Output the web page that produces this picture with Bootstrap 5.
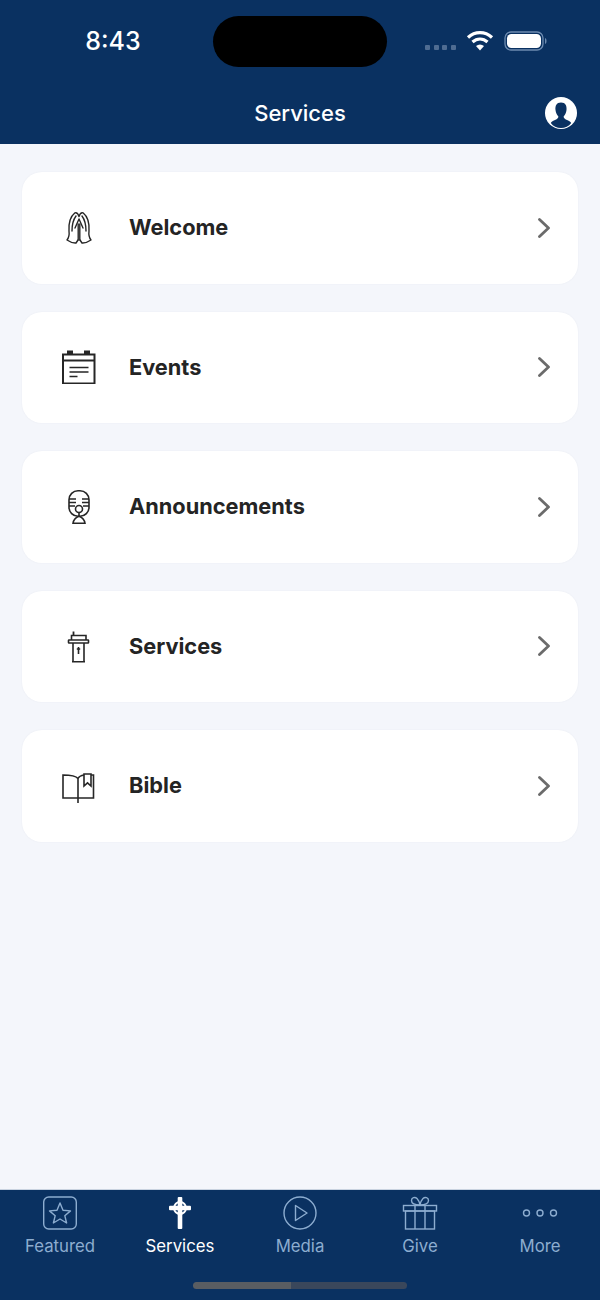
<!DOCTYPE html>
<html lang="en">

<head>
    <meta charset="UTF-8" />
    <meta name="viewport" content="width=device-width, initial-scale=1" />
    <title>Services</title>
    <link href="https://cdn.jsdelivr.net/npm/bootstrap@5.3.0/dist/css/bootstrap.min.css" rel="stylesheet">

    <style>
        body {
            width: 600px;
            height: 1300px;
            background-color: #f4f6fb;
            font-family: Inter, "Liberation Sans", sans-serif;
            overflow: hidden;
        }

        .app-top {
            height: 144px;
            background-color: #0a3161;
            color: #fff;
        }

        .status-row {
            padding-top: 16px;
        }

        .status-time {
            width: 213px;
            height: 51px;
            padding-top: 7px;
            padding-left: 13px;
            font-size: 25px;
            font-weight: 500;
        }

        .island {
            width: 174px;
            height: 51px;
            border-radius: 26px;
            background-color: #000;
        }

        .status-icons {
            padding-left: 38px;
            padding-top: 15px;
            height: 51px;
        }

        .title-row {
            display: grid;
            grid-template-columns: 1fr auto 1fr;
            margin-top: 30px;
            padding-right: 23px;
            height: 32px;
            padding-left: 23px;
        }

        .title-text {
            font-size: 22px;
            font-weight: 500;
            line-height: 32px;
        }

        .menu-list {
            padding: 28px 22px 0;
            gap: 28px;
        }

        .menu-card {
            height: 111.5px;
            padding: 0 27px 0 40px;
            background-color: #fff;
            border: 0;
            border-radius: 20px;
            box-shadow: 0 0 2px rgba(20, 40, 80, 0.05);
        }

        .menu-icon {
            width: 34px;
            height: 34px;
            margin-right: 33px;
            flex: none;
        }

        .menu-label {
            font-size: 21.75px;
            font-weight: 700;
            color: #242424;
        }

        .app-tabs {
            height: 111px;
            background-color: #0a3161;
            border-top: 1px solid #c9d3e0;
            padding-top: 6px;
        }

        .tab-item {
            width: 120px;
            color: #8dadd0;
            font-size: 16.8px;
            line-height: 20px;
        }

        .tab-item.active-tab {
            color: #fff;
        }

        .tab-icon {
            width: 36px;
            height: 34px;
            margin-bottom: 6px;
        }

        .home-bar {
            width: 214px;
            height: 7px;
            margin: 26px auto 0;
            border-radius: 4px;
            background: linear-gradient(to right, #595d62 46%, #3a475b 46%);
        }
    </style>
</head>

<body class="d-flex flex-column">

    <!-- Header -->
    <header class="app-top">
        <div class="status-row d-flex">
            <div class="status-time text-center">8:43</div>
            <div class="island"></div>
            <div class="status-icons d-flex align-items-start">
                <svg width="122" height="30" viewBox="0 0 122 30">
                    <g fill="#4f6c92">
                        <rect x="0" y="14" width="5" height="5" rx="1" />
                        <rect x="9" y="14" width="5" height="5" rx="1" />
                        <rect x="17" y="14" width="5" height="5" rx="1" />
                        <rect x="26" y="14" width="5" height="5" rx="1" />
                    </g>
                    <g fill="none" stroke="#fff" stroke-width="3.2">
                        <path d="M43 6.500 C50 0 60 0 67 6.500" />
                        <path d="M47.500 11 C52 7 58 7 62.500 11" />
                    </g>
                    <path d="M51 15 C53.500 13 56.500 13 59 15 L55 19.500 Z" fill="#fff" />
                    <rect x="80" y="1" width="38" height="18" rx="6" fill="none" stroke="#6d8bb0" stroke-width="1.3" />
                    <rect x="82" y="3" width="34" height="14" rx="4.500" fill="#fff" />
                    <path d="M120 7 C122 7.500 122 12.500 120 13 Z" fill="#6d8bb0" />
                </svg>
            </div>
        </div>
        <div class="title-row">
            <div></div>
            <div class="title-text">Services</div>
            <div class="d-flex justify-content-end">
                <svg width="32" height="32" viewBox="0 0 32 32">
                    <circle cx="16" cy="16" r="16" fill="#fff" />
                    <path d="M16 5.500 C11.500 5.500 10 9 10.500 13 C10.800 16 12 18 13.300 19.300 C13.500 21 12.500 22 10 23 C7.500 24 6.300 25 5.800 26 C8 29.500 12 31 16 31 C20 31 24 29.500 26.200 26 C25.700 25 24.500 24 22 23 C19.500 22 18.500 21 18.700 19.300 C20 18 21.200 16 21.500 13 C22 9 20.500 5.500 16 5.500 Z" fill="#0a3161" />
                </svg>
            </div>
        </div>
    </header>

    <!-- Menu -->
    <main class="menu-list flex-grow-1 d-flex flex-column">
        <div class="card menu-card flex-row align-items-center">
            <svg class="menu-icon" viewBox="0 0 34 34" fill="none" stroke="#262626" stroke-width="1.400" stroke-linejoin="round" stroke-linecap="round">
                <path d="M16 29 L14 32 C11 32.300 8 31 5 29 C7 26.500 7.500 24 7 20 C6.500 12 9 5 13 1.800 C15 1.200 16.200 3 17 5.500 C17.800 3 19 1.200 21 1.800 C25 5 27.500 12 27 20 C26.500 24 27 26.500 29 29 C26 31 23 32.300 20 32 L18 29" />
                <path d="M10 20 C10 14 11 9 14 5" />
                <path d="M24 20 C24 14 23 9 20 5" />
                <path d="M13 17 L17 8 L21 17" />
                <path d="M16.200 13 V29 M17.800 13 V29" />
            </svg>
            <div class="menu-label flex-grow-1">Welcome</div>
            <svg width="14" height="20" viewBox="0 0 14 20" fill="none" stroke="#6b6b6b" stroke-width="2.800" stroke-linecap="round" stroke-linejoin="round"><path d="M2.500 1.500 L11.500 10 L2.500 18.500" /></svg>
        </div>

        <div class="card menu-card flex-row align-items-center">
            <svg class="menu-icon" viewBox="0 0 34 34" fill="none" stroke="#262626" stroke-width="2">
                <rect x="1" y="4.500" width="31.500" height="29" />
                <path d="M1 10.500 H33" />
                <rect x="5" y="0.500" width="6" height="4" fill="#262626" stroke="none" />
                <rect x="22" y="0.500" width="6" height="4" fill="#262626" stroke="none" />
                <path d="M7.500 17.500 H26.500 M7.500 22 H26.500 M7.500 26.500 H15.500" stroke-width="1.600" />
            </svg>
            <div class="menu-label flex-grow-1">Events</div>
            <svg width="14" height="20" viewBox="0 0 14 20" fill="none" stroke="#6b6b6b" stroke-width="2.800" stroke-linecap="round" stroke-linejoin="round"><path d="M2.500 1.500 L11.500 10 L2.500 18.500" /></svg>
        </div>

        <div class="card menu-card flex-row align-items-center">
            <svg class="menu-icon" viewBox="0 0 34 34" fill="none" stroke="#262626" stroke-width="1.600">
                <rect x="7" y="0.800" width="20" height="25.500" rx="9" />
                <path d="M7 9 H14 M7 12.500 H14 M7 16 H13 M20 9 H27 M20 12.500 H27 M21 16 H27" />
                <circle cx="17" cy="19" r="3.500" />
                <path d="M17 22.500 V26" />
                <path d="M11 33.300 H23 C22.500 30 20 27.500 17 26.300 C14 27.500 11.500 30 11 33.300 Z" />
            </svg>
            <div class="menu-label flex-grow-1">Announcements</div>
            <svg width="14" height="20" viewBox="0 0 14 20" fill="none" stroke="#6b6b6b" stroke-width="2.800" stroke-linecap="round" stroke-linejoin="round"><path d="M2.500 1.500 L11.500 10 L2.500 18.500" /></svg>
        </div>

        <div class="card menu-card flex-row align-items-center">
            <svg class="menu-icon" viewBox="0 0 34 34" fill="none" stroke="#262626" stroke-width="1.600">
                <path d="M11.500 2.500 V6.500" stroke-width="1.800" />
                <path d="M9.500 11 V6.500 H24 V11" />
                <rect x="6.500" y="11" width="20" height="3" rx="0.500" />
                <path d="M11 14 V32.500 M22 14 V32.500 M10 32.800 H23" />
                <path d="M16.500 18 V25 M14.800 20 H18.200" />
            </svg>
            <div class="menu-label flex-grow-1">Services</div>
            <svg width="14" height="20" viewBox="0 0 14 20" fill="none" stroke="#6b6b6b" stroke-width="2.800" stroke-linecap="round" stroke-linejoin="round"><path d="M2.500 1.500 L11.500 10 L2.500 18.500" /></svg>
        </div>

        <div class="card menu-card flex-row align-items-center">
            <svg class="menu-icon" viewBox="0 0 34 34" fill="none" stroke="#262626" stroke-width="1.600">
                <path d="M16 29 V9.500 C14 7 11 6 1 6 V29 H31.500 V6 H29" />
                <path d="M16 9.500 C17 7.500 19 6.500 22 6" />
                <path d="M22 5 H29 V17 L25.500 13.800 L22 17 Z" />
                <path d="M16 29 V34" />
            </svg>
            <div class="menu-label flex-grow-1">Bible</div>
            <svg width="14" height="20" viewBox="0 0 14 20" fill="none" stroke="#6b6b6b" stroke-width="2.800" stroke-linecap="round" stroke-linejoin="round"><path d="M2.500 1.500 L11.500 10 L2.500 18.500" /></svg>
        </div>
    </main>

    <!-- Tab bar -->
    <footer class="app-tabs">
        <div class="d-flex">
            <div class="tab-item d-flex flex-column align-items-center">
                <svg class="tab-icon" viewBox="0 0 36 34" fill="none" stroke="#8dadd0" stroke-width="1.400" stroke-linejoin="round">
                    <rect x="1.700" y="1" width="32.600" height="32" rx="5" />
                    <path d="M18 7 L21 14.300 L28.500 14.900 L22.800 19.700 L24.600 27 L18 23 L11.400 27 L13.200 19.700 L7.500 14.900 L15 14.300 Z" />
                </svg>
                <span>Featured</span>
            </div>
            <div class="tab-item active-tab d-flex flex-column align-items-center">
                <svg class="tab-icon" viewBox="0 0 36 34" fill="#fff">
                    <rect x="15.700" y="1" width="4.600" height="32" rx="1" />
                    <rect x="7" y="9.700" width="22" height="4.600" rx="1" />
                    <circle cx="18" cy="12" r="6" fill="none" stroke="#fff" stroke-width="1.800" />
                </svg>
                <span>Services</span>
            </div>
            <div class="tab-item d-flex flex-column align-items-center">
                <svg class="tab-icon" viewBox="0 0 36 34" fill="none" stroke="#8dadd0" stroke-width="1.400" stroke-linejoin="round">
                    <circle cx="18" cy="17" r="16" />
                    <path d="M13.500 9.500 L25 17 L13.500 24.500 Z" />
                </svg>
                <span>Media</span>
            </div>
            <div class="tab-item d-flex flex-column align-items-center">
                <svg class="tab-icon" viewBox="0 0 36 34" fill="none" stroke="#8dadd0" stroke-width="1.400">
                    <rect x="1.500" y="9.500" width="33" height="5.500" />
                    <rect x="3.500" y="15" width="29" height="18" />
                    <path d="M13 9.500 V33 M23 9.500 V33" />
                    <path d="M18 9 C13 9 9.500 7.500 9.500 4.500 C9.500 1.500 13 0.500 15 2.500 C16.500 4 17.500 6.500 18 9 C18.500 6.500 19.500 4 21 2.500 C23 0.500 26.500 1.500 26.500 4.500 C26.500 7.500 23 9 18 9 Z" />
                </svg>
                <span>Give</span>
            </div>
            <div class="tab-item d-flex flex-column align-items-center">
                <svg class="tab-icon" viewBox="0 0 36 34" fill="none" stroke="#8dadd0" stroke-width="1.400">
                    <circle cx="4.500" cy="17" r="3" />
                    <circle cx="18" cy="17" r="3" />
                    <circle cx="31.500" cy="17" r="3" />
                </svg>
                <span>More</span>
            </div>
        </div>
        <div class="home-bar"></div>
    </footer>

    <script src="https://cdn.jsdelivr.net/npm/bootstrap@5.3.0/dist/js/bootstrap.bundle.min.js"></script>
</body>

</html>
